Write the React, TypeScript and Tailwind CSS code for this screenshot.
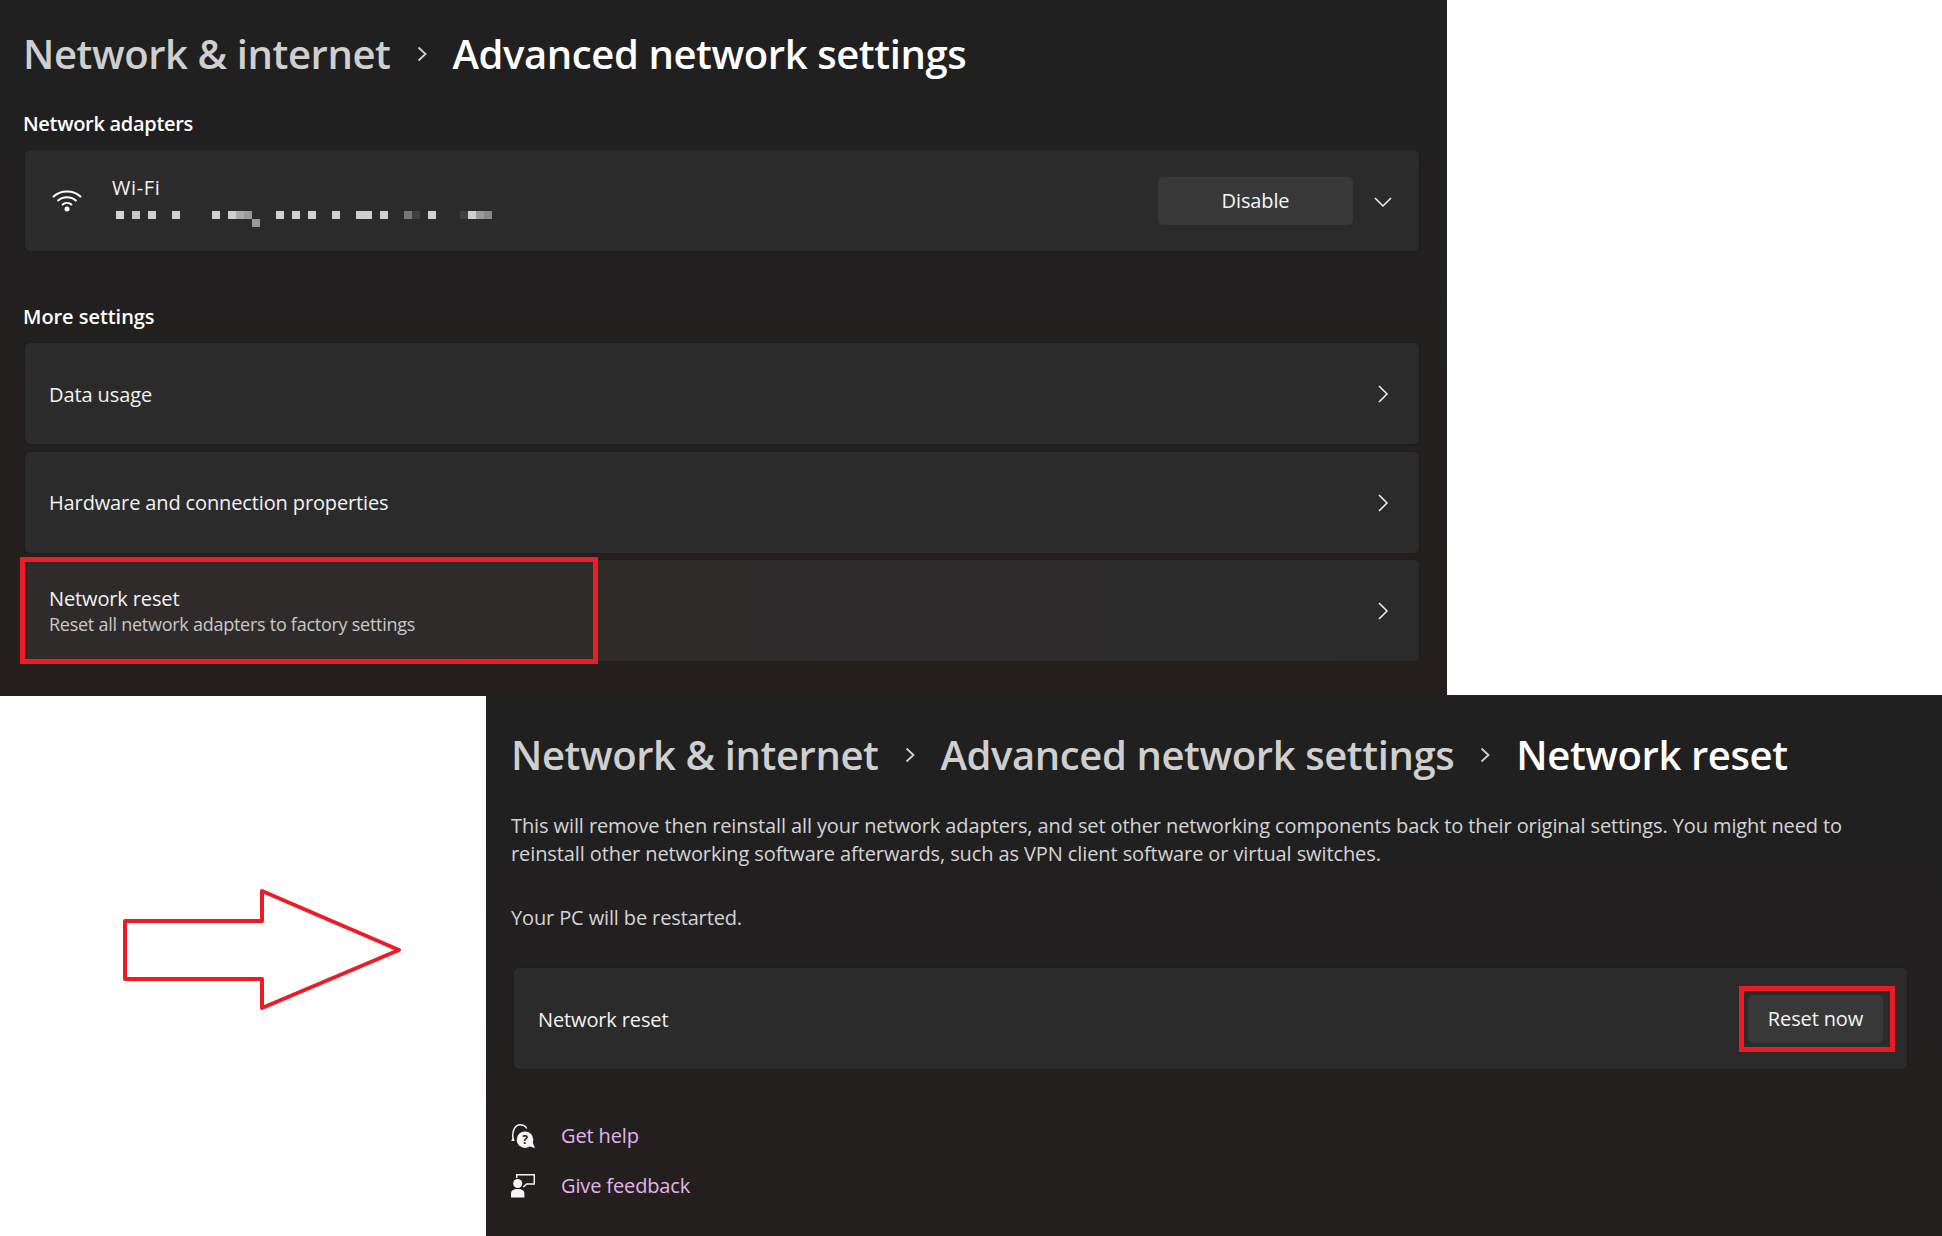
import React from "react";

const font = "font-['Open_Sans',sans-serif]";

// mosaic over the hidden adapter name, one entry per 8px cell
const mosaic = [
  "bg-[#d4d4d4]", "", "bg-[#c8c8c8]", "", "bg-[#cfcfcf]", "", "", "bg-[#cfcfcf]", "", "", "", "",
  "bg-[#d0d0d0]", "", "bg-[#cdcdcd]", "bg-[#aaaaaa]", "bg-[#999999]", "", "", "",
  "bg-[#d0d0d0]", "", "bg-[#cfcfcf]", "", "bg-[#d0d0d0]", "", "", "bg-[#d0d0d0]", "", "",
  "bg-[#cdcdcd]", "bg-[#cdcdcd]", "", "bg-[#d0d0d0]", "", "", "bg-[#777777]", "bg-[#3f3f3f]", "", "bg-[#d0d0d0]", "", "", "",
  "bg-[#3f3f3f]", "bg-[#cfcfcf]", "bg-[#999999]", "bg-[#888888]",
];

function Chevron() {
  return (
    <svg width="16" height="20" viewBox="0 0 16 20" fill="none" stroke="#f2f2f2" strokeWidth="1.5" className="mt-[1px]">
      <path d="M4 2l8 8-8 8" />
    </svg>
  );
}

function Crumb() {
  return (
    <svg width="12" height="18" viewBox="0 0 12 18" fill="none" stroke="#d0d0d0" strokeWidth="1.8" className="mx-[25px]">
      <path d="M2.500 2.500l7 6.500-7 6.500" />
    </svg>
  );
}

function WifiIcon() {
  return (
    <svg width="30" height="23" viewBox="0 0 30 23" fill="none" stroke="#ffffff" strokeWidth="2">
      <path d="M1 8C8.500 .5 21.500 .5 29 8" />
      <path d="M5.500 12c5.500-5 13.500-5 19 0" />
      <path d="M10 16c3-2.700 7-2.700 10 0" />
      <circle cx="15" cy="20" r="2.500" fill="#ffffff" stroke="none" />
    </svg>
  );
}

function HelpIcon() {
  return (
    <svg width="24" height="24" viewBox="0 0 24 24" className="shrink-0">
      <path d="M2.500 16.500C.2 9 3.500 .8 9 .8c3 0 5.400 1.300 6.700 3.700" fill="none" stroke="#f5f5f5" strokeWidth="1.500" />
      <path d="M0 16.700l3.600.3-1.300-3.200z" fill="#f5f5f5" />
      <circle cx="14" cy="15.700" r="8.300" fill="#f5f5f5" />
      <path d="M17 22l7 2-2.500-6z" fill="#f5f5f5" />
      <text x="14" y="20" textAnchor="middle" fontSize="12" fontWeight="700" fontFamily="Open Sans" fill="#231f1e">?</text>
    </svg>
  );
}

function FeedbackIcon() {
  return (
    <svg width="24" height="24" viewBox="0 0 24 24" className="shrink-0">
      <circle cx="6.700" cy="9.500" r="4.500" fill="#f5f5f5" />
      <path d="M0 23.500v-4C0 16.500 2.500 15 6.700 15s6.700 1.500 6.700 4.500v4z" fill="#f5f5f5" />
      <path d="M5.700 4V.8h17.600V10h-7.600l-3.400 3" fill="none" stroke="#f5f5f5" strokeWidth="1.500" />
    </svg>
  );
}

function Card({ children, warm }: { children: React.ReactNode; warm?: boolean }) {
  return (
    <div className={`relative flex h-[101px] w-[1394px] items-center rounded-[5px] pl-[24px] pr-[28px] shadow-[0_0_0_1px_#1d1d1d] ${warm ? "bg-gradient-to-r from-[#302b2b] to-[#2c2b2b]" : "bg-[#2b2b2b]"}`}>
      {children}
    </div>
  );
}

function LinkRow({ icon, label }: { icon: React.ReactNode; label: string }) {
  return (
    <div className="flex h-[50px] items-center gap-[26px]">
      {icon}
      <span className="text-[20px] tracking-[-0.13px] text-[#e6b3ea]">{label}</span>
    </div>
  );
}

export default function App() {
  return (
    <div className={`flex h-[1236px] w-[1942px] flex-col overflow-hidden bg-white ${font}`}>
      {/* first screenshot */}
      <div className="flex h-[695px] shrink-0">
        <div className="w-[1447px] bg-gradient-to-b from-[#202021] to-[#241f1d] pl-[23px] pt-[30px] text-white">
          <div className="flex h-[48px] items-center text-[40px] font-semibold tracking-[-0.4px]">
            <span className="text-[#cfcfcf]">Network &amp; internet</span>
            <Crumb />
            <span>Advanced network settings</span>
          </div>
          <div className="mt-[32px] mb-[12px] h-[28px] text-[20px] font-semibold leading-[28px] tracking-[-0.3px]">Network adapters</div>
          <div className="ml-[2px]">
            <Card>
              <div className="ml-[3px] shrink-0">
                <WifiIcon />
              </div>
              <div className="ml-[30px] flex flex-col">
                <span className="text-[20px] leading-[26px] tracking-[0.6px] text-[#f2f2f2]">Wi-Fi</span>
                <div className="ml-[4px] mt-[10px] flex h-[8px]">
                  {mosaic.map((c, i) => (
                    <div key={i} className={`h-[8px] w-[8px] ${c}`}></div>
                  ))}
                </div>
                <div className="ml-[140px] h-[8px] w-[8px] bg-[#999999]"></div>
              </div>
              <button className="ml-auto flex h-[48px] w-[195px] items-center justify-center rounded-[5px] bg-[#383838] text-[20px] tracking-[-0.13px] text-[#f5f5f5]">
                Disable
              </button>
              <svg width="20" height="12" viewBox="0 0 20 12" fill="none" stroke="#f2f2f2" strokeWidth="1.5" className="ml-[20px] mr-[-2px] mt-[2px]">
                <path d="M2 2l8 8 8-8" />
              </svg>
            </Card>
          </div>
          <div className="mt-[52px] mb-[12px] h-[28px] text-[20px] font-semibold leading-[28px] tracking-[-0.05px]">More settings</div>
          <div className="ml-[2px] flex flex-col gap-[7.5px]">
            <Card>
              <span className="mt-[2px] text-[20px] tracking-[-0.1px] text-[#f2f2f2]">Data usage</span>
              <div className="ml-auto"><Chevron /></div>
            </Card>
            <Card>
              <span className="mt-[2px] text-[20px] tracking-[-0.13px] text-[#f2f2f2]">Hardware and connection properties</span>
              <div className="ml-auto"><Chevron /></div>
            </Card>
            <Card warm>
              <div className="mt-[2px] flex flex-col">
                <span className="text-[20px] leading-[26px] tracking-[-0.13px] text-[#f5f5f5]">Network reset</span>
                <span className="text-[18px] leading-[25px] tracking-[-0.26px] text-[#c8c8c8]">Reset all network adapters to factory settings</span>
              </div>
              <div className="ml-auto"><Chevron /></div>
              <div className="absolute left-[-5px] top-[-3px] h-[107px] w-[578px] border-[5px] border-[#ed1c24]"></div>
            </Card>
          </div>
        </div>
        <div className="flex-1 bg-white"></div>
      </div>

      {/* second screenshot */}
      <div className="flex flex-1">
        <div className="w-[486px] shrink-0 border-t border-[#241f1d] bg-white pl-[122px] pt-[192px]">
          <svg width="280" height="122" viewBox="122 887 280 122" fill="none" stroke="#ed1c24" strokeWidth="4" strokeLinejoin="round">
            <path d="M125 920h137v-30l137 59-137 58v-29H125z" />
          </svg>
        </div>
        <div className="flex-1 bg-gradient-to-b from-[#202021] to-[#231f1e] pl-[25px] pt-[36px] text-white">
          <div className="flex h-[48px] items-center text-[40px] font-semibold tracking-[-0.4px]">
            <span className="text-[#cfcfcf]">Network &amp; internet</span>
            <Crumb />
            <span className="text-[#cfcfcf]">Advanced network settings</span>
            <Crumb />
            <span>Network reset</span>
          </div>
          <p className="mt-[33px] w-[1400px] text-[20px] leading-[28px] tracking-[-0.1px] text-[#d4d4d4]">
            This will remove then reinstall all your network adapters, and set other networking components back to their original settings. You might need to reinstall other networking software afterwards, such as VPN client software or virtual switches.
          </p>
          <p className="mt-[36px] text-[20px] leading-[28px] tracking-[-0.13px] text-[#d4d4d4]">Your PC will be restarted.</p>
          <div className="ml-[3px] mt-[36px] flex h-[101px] w-[1393px] items-center rounded-[5px] bg-[#2b2b2b] pl-[24px] pr-[12px] shadow-[0_0_0_1px_#1d1d1d]">
            <span className="mt-[3px] text-[20px] tracking-[-0.13px] text-[#f2f2f2]">Network reset</span>
            <div className="ml-auto flex h-[66px] w-[156px] items-center border-[5px] border-[#ed1c24] pl-[4px]">
              <button className="flex h-[48px] w-[135px] items-center justify-center rounded-[5px] bg-[#383838] pt-[1px] text-[20px] tracking-[-0.13px] text-[#f5f5f5]">
                Reset now
              </button>
            </div>
          </div>
          <div className="mt-[42px] flex flex-col">
            <LinkRow icon={<HelpIcon />} label="Get help" />
            <LinkRow icon={<FeedbackIcon />} label="Give feedback" />
          </div>
        </div>
      </div>
    </div>
  );
}
